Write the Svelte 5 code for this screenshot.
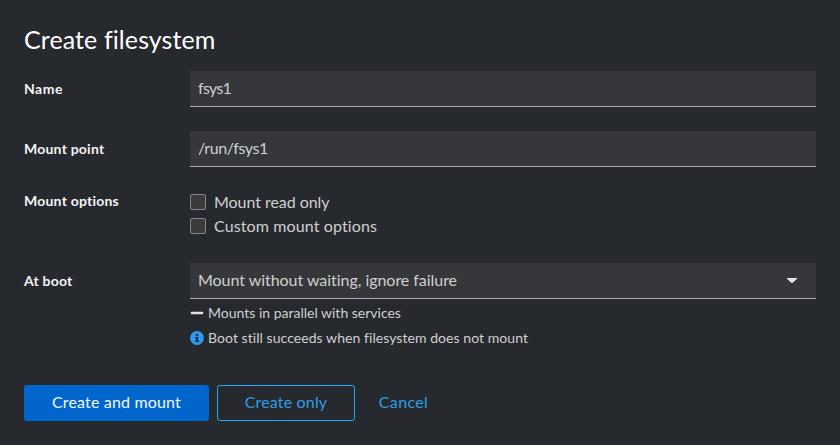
<script>
  let name = $state('fsys1');
  let mountPoint = $state('/run/fsys1');
</script>

<form class="dialog" onsubmit={(e) => e.preventDefault()}>
  <h1>Create filesystem</h1>

  <div class="row">
    <label class="label name" for="name">Name</label>
    <input id="name" class="control short" bind:value={name} />
  </div>

  <div class="row">
    <label class="label" for="mount">Mount point</label>
    <input id="mount" class="control" bind:value={mountPoint} />
  </div>

  <div class="row options">
    <span class="label">Mount options</span>
    <div class="checks">
      <label class="check"><input type="checkbox" /><span class="ro">Mount read only</span></label>
      <label class="check"><input type="checkbox" /><span class="custom">Custom mount options</span></label>
    </div>
  </div>

  <div class="row">
    <span class="label">At boot</span>
    <div class="boot">
      <button type="button" class="control select">
        <span>Mount without waiting, ignore failure</span>
        <svg width="10" height="5" viewBox="0 0 10 5"><path d="M.5 0h9c.5 0 .7.600.3 1L5.700 4.700a1 1 0 0 1-1.400 0L.2 1C-.2.600 0 0 .5 0z" fill="currentColor" /></svg>
      </button>
      <div class="hint">
        <svg width="14" height="14" viewBox="0 0 14 14"><rect x=".8" y="5.700" width="12.400" height="2.600" rx=".8" fill="#e6e2e6" /></svg>
        <span>Mounts in parallel with services</span>
      </div>
      <div class="hint">
        <svg width="14" height="14" viewBox="0 0 14 14">
          <circle cx="7" cy="7" r="6.900" fill="#2b9af3" />
          <circle cx="7" cy="4" r="1.300" fill="#26292d" />
          <path d="M5.200 5.900h2.900v3.500h.9V11H5.200V9.400h.9V7.400h-.9z" fill="#26292d" />
        </svg>
        <span class="still">Boot still succeeds when filesystem does not mount</span>
      </div>
    </div>
  </div>

  <footer>
    <button class="btn primary">Create and mount</button>
    <button type="button" class="btn secondary">Create only</button>
    <button type="button" class="btn link">Cancel</button>
  </footer>
</form>

<style>
  :global(body) { margin: 0; background: #26292d; }
  .dialog {
    box-sizing: border-box;
    height: 445px;
    padding: 23px 24px 24px;
    font: 16px/24px Lato, 'Open Sans', sans-serif;
    font-variant-ligatures: none;
    color: #d0d0d0;
  }
  h1 {
    margin: 0 0 16px;
    font-size: 25px;
    line-height: 32px;
    font-weight: 400;
    letter-spacing: 0.1px;
    color: #fff;
  }
  .row { display: flex; margin-bottom: 24px; }
  .label {
    flex: 0 0 166px;
    padding-top: 7px;
    font-size: 14px;
    line-height: 21px;
    font-weight: 700;
    letter-spacing: 0.22px;
    color: #f4f4f4;
  }
  .name { letter-spacing: 0.5px; }
  .control {
    box-sizing: border-box;
    width: 626px;
    height: 36px;
    margin: 0;
    padding: 0 8px 2px;
    border: 0;
    border-bottom: 1px solid #aaabac;
    border-radius: 0;
    outline: 0;
    background: #36373a;
    color: #d0d0d0;
    font: inherit;
    font-variant-ligatures: none;
    letter-spacing: -0.45px;
  }
  .short { letter-spacing: -0.7px; }
  .options .label { margin-top: -1px; padding-top: 0; }
  .check { display: flex; align-items: center; gap: 8px; height: 24px; }
  .check span { margin-top: -2px; }
  .check input {
    appearance: none;
    box-sizing: border-box;
    width: 16px;
    height: 16px;
    margin: -2px 0 0;
    border: 1px solid #858585;
    border-radius: 2px;
    background: #3b3b3b;
  }
  .ro { letter-spacing: -0.05px; }
  .custom { letter-spacing: 0.12px; }
  .select {
    display: flex;
    align-items: center;
    justify-content: space-between;
    padding-right: 19px;
    letter-spacing: -0.04px;
  }
  .select svg { margin-top: 2px; color: #e6e6e6; }
  .boot { display: flex; flex-direction: column; }
  .hint {
    display: flex;
    align-items: center;
    gap: 4px;
    height: 25px;
    font-size: 14px;
  }
  .hint svg { margin-top: -1px; }
  .hint span { margin-top: -2px; }
  .hint:nth-child(2) { margin-top: 2px; }
  .still { letter-spacing: 0.06px; }
  footer { display: flex; gap: 8px; margin-top: 34px; }
  .btn {
    box-sizing: border-box;
    height: 36px;
    padding: 0 0 2px;
    border: 1px solid transparent;
    border-radius: 3px;
    background: none;
    font: inherit;
    font-variant-ligatures: none;
    letter-spacing: 0.17px;
    color: #2b9fe6;
  }
  .primary { width: 185px; background: #06c; color: #f4f8ff; }
  .secondary { width: 138px; border-color: #1fa7f8; }
  .link { width: 81px; letter-spacing: 0.35px; }
</style>
